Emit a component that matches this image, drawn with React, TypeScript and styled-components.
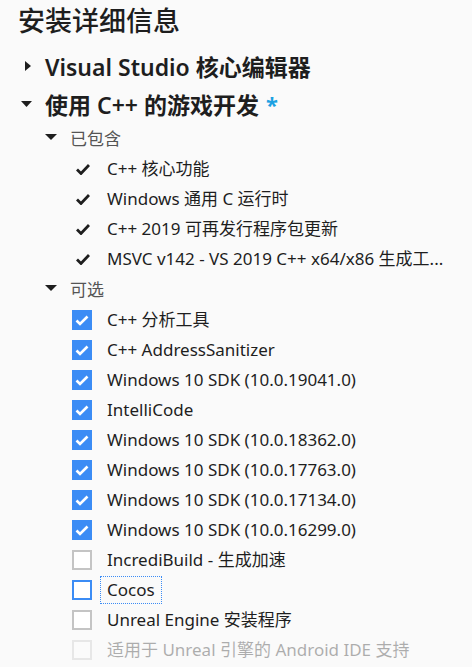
import React from "react";
import styled, { createGlobalStyle } from "styled-components";

const Global = createGlobalStyle`
  html, body { margin: 0; padding: 0; background: #fafafa; }
  body { font-family: "Noto Sans", "Noto Sans CJK SC", sans-serif; color: #1e1e1e; }
`;

const Page = styled.div`
  width: 472px;
  height: 667px;
  overflow: hidden;
  background: #fafafa;
  display: flex;
  flex-direction: column;
`;

const Title = styled.h1`
  margin: 0;
  padding: 3px 0 0 18px;
  height: 47px;
  box-sizing: border-box;
  font-size: 27px;
  font-weight: 500;
  line-height: 34px;
  font-family: "Noto Sans CJK SC", sans-serif;
  color: #1e1e1e;
`;

const TopRow = styled.div`
  height: 38px;
  display: flex;
  align-items: center;
  padding-left: 20px;
  font-size: 23px;
  font-weight: 600;
  color: #1e1e1e;
`;

const ArrowSlot = styled.span<{ $w: number; $off: number }>`
  width: ${(p) => p.$w}px;
  padding-left: ${(p) => p.$off}px;
  box-sizing: border-box;
  display: flex;
  align-items: center;
  flex-shrink: 0;
`;

const Star = styled.span`
  color: #1ba1e2;
  margin-left: 7px;
  font-weight: 700;
  font-size: 22px;
`;

const GroupRow = styled.div`
  height: 28px;
  margin-bottom: 3px;
  display: flex;
  align-items: center;
  padding-left: 45px;
  font-size: 17px;
  color: #555;
`;

const ItemRow = styled.div<{ $faded?: boolean }>`
  height: 30px;
  display: flex;
  align-items: center;
  padding-left: 72px;
  font-size: 17px;
  color: #1e1e1e;
  white-space: nowrap;
  opacity: ${(p) => (p.$faded ? 0.35 : 1)};
`;

const MarkSlot = styled.span`
  width: 36px;
  flex-shrink: 0;
  display: flex;
  align-items: center;
`;

const Box = styled.span<{ $checked?: boolean; $focus?: boolean }>`
  width: 20px;
  height: 20px;
  box-sizing: border-box;
  display: flex;
  align-items: center;
  justify-content: center;
  background: ${(p) => (p.$checked ? "#3b8cf5" : "#ffffff")};
  border: 2px solid
    ${(p) => (p.$checked ? "#3b8cf5" : p.$focus ? "#3b8cf5" : "#c4c4c4")};
`;

const Label = styled.span<{ $focus?: boolean }>`
  line-height: 22px;
  padding: 2px 6px;
  margin-left: -8px;
  border: 1px dotted ${(p) => (p.$focus ? "#3b8cf5" : "transparent")};
`;

const RightTri = () => (
  <svg width="6" height="10" viewBox="0 0 6 10">
    <path d="M0 0 L6 5 L0 10 Z" fill="#1e1e1e" />
  </svg>
);

const DownTri = ({ w = 11 }: { w?: number }) => (
  <svg width={w} height="6" viewBox={`0 0 ${w} 6`}>
    <path d={`M0 0 L${w} 0 L${w / 2} 6 Z`} fill="#1e1e1e" />
  </svg>
);

const Check = () => (
  <svg width="14" height="11" viewBox="0 0 14 11" style={{ marginLeft: 4 }}>
    <path d="M1 5.5 L5 9.5 L13 1" fill="none" stroke="#1e1e1e" strokeWidth="2.8" />
  </svg>
);

const WhiteCheck = () => (
  <svg width="14" height="11" viewBox="0 0 14 11">
    <path d="M1.5 5.5 L5 9 L12.5 1.5" fill="none" stroke="#fff" strokeWidth="2.6" />
  </svg>
);

const included = [
  "C++ 核心功能",
  "Windows 通用 C 运行时",
  "C++ 2019 可再发行程序包更新",
  "MSVC v142 - VS 2019 C++ x64/x86 生成工...",
];

type Opt = { label: string; checked?: boolean; focus?: boolean; faded?: boolean };

const optional: Opt[] = [
  { label: "C++ 分析工具", checked: true },
  { label: "C++ AddressSanitizer", checked: true },
  { label: "Windows 10 SDK (10.0.19041.0)", checked: true },
  { label: "IntelliCode", checked: true },
  { label: "Windows 10 SDK (10.0.18362.0)", checked: true },
  { label: "Windows 10 SDK (10.0.17763.0)", checked: true },
  { label: "Windows 10 SDK (10.0.17134.0)", checked: true },
  { label: "Windows 10 SDK (10.0.16299.0)", checked: true },
  { label: "IncrediBuild - 生成加速" },
  { label: "Cocos", focus: true },
  { label: "Unreal Engine 安装程序" },
  { label: "适用于 Unreal 引擎的 Android IDE 支持", faded: true },
];

export default function App() {
  return (
    <Page>
      <Global />
      <Title>安装详细信息</Title>
      <TopRow>
        <ArrowSlot $w={25} $off={5}>
          <RightTri />
        </ArrowSlot>
        Visual Studio 核心编辑器
      </TopRow>
      <TopRow>
        <ArrowSlot $w={25} $off={1}>
          <DownTri />
        </ArrowSlot>
        使用 C++ 的游戏开发<Star>*</Star>
      </TopRow>
      <GroupRow>
        <ArrowSlot $w={25} $off={0}>
          <DownTri w={12} />
        </ArrowSlot>
        已包含
      </GroupRow>
      {included.map((t) => (
        <ItemRow key={t}>
          <MarkSlot>
            <Check />
          </MarkSlot>
          <Label>{t}</Label>
        </ItemRow>
      ))}
      <GroupRow>
        <ArrowSlot $w={25} $off={0}>
          <DownTri w={12} />
        </ArrowSlot>
        可选
      </GroupRow>
      {optional.map((o) => (
        <ItemRow key={o.label} $faded={o.faded}>
          <MarkSlot>
            <Box $checked={o.checked} $focus={o.focus}>
              {o.checked && <WhiteCheck />}
            </Box>
          </MarkSlot>
          <Label $focus={o.focus}>{o.label}</Label>
        </ItemRow>
      ))}
    </Page>
  );
}
